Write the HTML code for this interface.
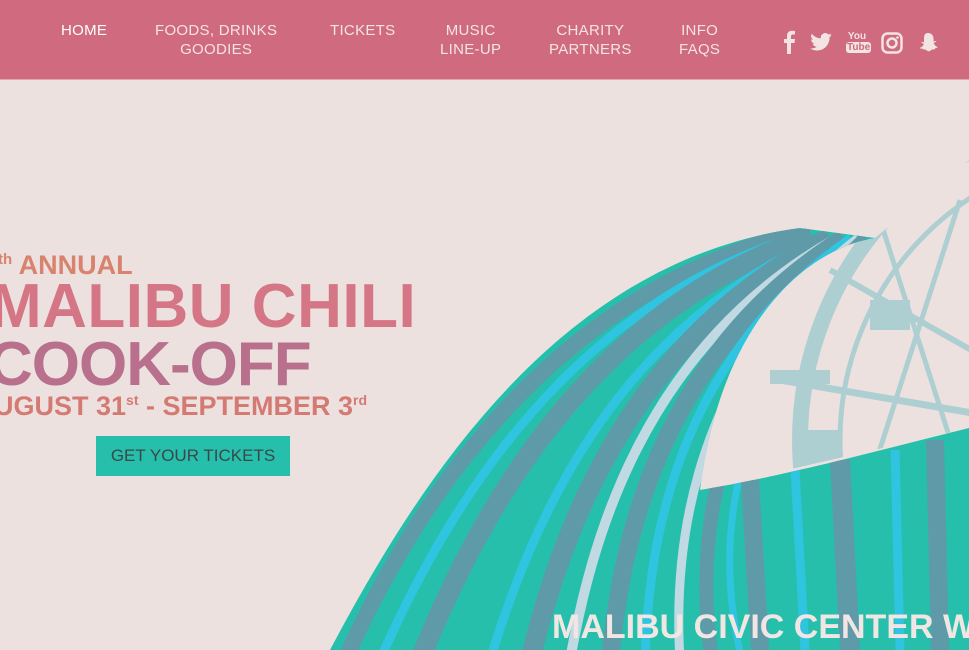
<!DOCTYPE html>
<html><head><meta charset="utf-8"><style>
*{margin:0;padding:0;box-sizing:border-box}
html,body{width:969px;height:650px;overflow:hidden}
body{background:#ede1e0;font-family:"Liberation Sans",sans-serif;position:relative}
.hdr{position:absolute;left:0;top:0;width:969px;height:80px;background:#d06a7e;border-bottom:1px solid #e2a9b4}
.nav{position:absolute;top:21px;color:#f3e4e4;font-size:15px;line-height:19px;text-align:center;letter-spacing:.3px}
.ic{position:absolute;top:30px}
.t{position:absolute;font-weight:bold;white-space:nowrap}
.btn{position:absolute;left:96px;top:436px;width:194px;height:40px;background:#26bfac;color:#3b4848;font-size:17px;line-height:40px;text-align:center}
</style></head><body>
<svg style="position:absolute;left:0;top:0" width="969" height="650">
<defs>
<clipPath id="wv"><path d="M330 650 C420 480 560 260 800 228 L875 238 C800 250 720 330 700 490 C790 475 880 450 969 428 L969 650 Z"/></clipPath>
<clipPath id="fw"><path d="M700 490 C720 330 800 250 875 238 L969 160 L969 428 Z"/></clipPath>
</defs>
<g clip-path="url(#fw)" fill="none" stroke="#aecfd2">
<circle cx="1130" cy="440" r="330" stroke-width="16"/>
<circle cx="1130" cy="440" r="290" stroke-width="5"/>
<line x1="780" y1="380" x2="1130" y2="440" stroke-width="7"/>
<line x1="830" y1="270" x2="1130" y2="440" stroke-width="6"/>
<line x1="800" y1="470" x2="1130" y2="440" stroke-width="5"/>
<line x1="880" y1="220" x2="960" y2="470" stroke-width="5"/>
<line x1="960" y1="200" x2="870" y2="480" stroke-width="5"/>
<rect x="770" y="370" width="60" height="14" fill="#aecfd2" stroke="none"/>
<rect x="870" y="300" width="40" height="30" fill="#aecfd2" stroke="none"/>
<rect x="800" y="430" width="40" height="35" fill="#aecfd2" stroke="none"/>
</g>
<g clip-path="url(#wv)">
<rect x="300" y="200" width="700" height="460" fill="#26bfac"/>
<g fill="none">
<path d="M345 660 C420 490 560 290 800 232" stroke="#5f9aa8" stroke-width="16"/>
<path d="M380 660 C450 500 575 300 806 234" stroke="#2fc4e0" stroke-width="9"/>
<path d="M420 660 C480 510 590 310 812 236" stroke="#5f9aa8" stroke-width="20"/>
<path d="M490 660 C530 530 610 330 824 238" stroke="#2fc4e0" stroke-width="9"/>
<path d="M530 660 C560 540 625 340 830 238" stroke="#5f9aa8" stroke-width="20"/>
<path d="M570 660 C590 550 638 350 837 238" stroke="#c1d9e2" stroke-width="10"/>
<path d="M610 660 C620 560 650 360 844 238" stroke="#5f9aa8" stroke-width="18"/>
<path d="M645 660 C648 570 662 370 851 238" stroke="#2fc4e0" stroke-width="9"/>
<path d="M680 660 C675 580 676 380 858 238" stroke="#c1d9e2" stroke-width="9"/>
<path d="M712 660 C700 580 690 400 866 238" stroke="#5f9aa8" stroke-width="14"/>
<path d="M742 660 C722 580 705 420 873 240" stroke="#2fc4e0" stroke-width="7"/>
<path d="M750 480 L760 650" stroke="#5f9aa8" stroke-width="18"/>
<path d="M795 470 L805 650" stroke="#2fc4e0" stroke-width="9"/>
<path d="M840 460 L850 650" stroke="#5f9aa8" stroke-width="20"/>
<path d="M895 450 L900 650" stroke="#2fc4e0" stroke-width="9"/>
<path d="M935 440 L940 650" stroke="#5f9aa8" stroke-width="18"/>
</g>
</g>
</svg>
<div class="hdr"></div>
<div class="nav" style="left:61px;color:#fff">HOME</div>
<div class="nav" style="left:155px">FOODS, DRINKS<br>GOODIES</div>
<div class="nav" style="left:330px">TICKETS</div>
<div class="nav" style="left:440px">MUSIC<br>LINE-UP</div>
<div class="nav" style="left:549px">CHARITY<br>PARTNERS</div>
<div class="nav" style="left:679px">INFO<br>FAQS</div>
<svg class="ic" style="left:782px" width="14" height="24" viewBox="0 0 14 24"><path d="M9 24V13h3.5l.5-4H9V6.5C9 5.3 9.4 4.5 11 4.5h2V1C12.5.9 11.3.8 10 .8 7 .8 5 2.6 5 6v3H2v4h3v11z" fill="#f3e4e4"/></svg>
<svg class="ic" style="left:810px;top:33px" width="22" height="18" viewBox="0 0 24 20"><path d="M24 2.4c-.9.4-1.8.6-2.8.8 1-.6 1.8-1.6 2.2-2.7-1 .6-2 1-3.1 1.2A4.9 4.9 0 0 0 11.9 6 14 14 0 0 1 1.7.9a4.9 4.9 0 0 0 1.5 6.6c-.8 0-1.6-.3-2.2-.6 0 2.4 1.7 4.4 3.9 4.8-.7.2-1.5.2-2.2.1.6 2 2.4 3.4 4.6 3.4A9.9 9.9 0 0 1 0 17.2 14 14 0 0 0 7.5 19.4c9.1 0 14-7.5 14-14v-.6c1-.7 1.8-1.6 2.5-2.4z" fill="#f3e4e4"/></svg>
<div class="ic" style="left:846px;top:31px;width:22px;color:#f3e4e4;font-size:10px;line-height:11px;font-weight:bold;text-align:center">You<br><span style="background:#f3e4e4;color:#d06a7e;border-radius:3px;padding:0 1px">Tube</span></div>
<svg class="ic" style="left:881px;top:32px" width="22" height="22" viewBox="0 0 22 22"><rect x="1.5" y="1.5" width="19" height="19" rx="5" fill="none" stroke="#f3e4e4" stroke-width="2.5"/><circle cx="11" cy="11" r="4.5" fill="none" stroke="#f3e4e4" stroke-width="2.5"/><circle cx="16.5" cy="5.5" r="1.3" fill="#f3e4e4"/></svg>
<svg class="ic" style="left:917px;top:32px" width="22" height="22" viewBox="0 0 22 22"><path d="M11 1c3.5 0 5.5 2.5 5.5 5.5v3l2-.5c.6 0 .8.7.2 1l-2 1c.5 2 2.3 3.5 4 4-.2.8-1.5 1-2.5 1.2-.2.8-.3 1.3-1.2 1.2-1.5-.2-2.6.3-3.5 1.2-1 .8-2.5.8-3.5 0-1-.9-2-1.4-3.5-1.2-.9.1-1-.4-1.2-1.2C4.3 16.9 3 16.7 2.8 15.9c1.7-.5 3.5-2 4-4l-2-1c-.6-.3-.4-1 .2-1l2 .5v-3C7 3.5 7.5 1 11 1z" fill="#f3e4e4"/></svg>

<div class="t" style="left:-2px;top:250px;font-size:27px;color:#d8836e"><sup style="font-size:15px">th</sup> ANNUAL</div>
<div class="t" style="left:-10px;top:271px;font-size:62px;color:#d47685;letter-spacing:0.5px">MALIBU CHILI</div>
<div class="t" style="left:-12px;top:329px;font-size:62px;color:#b8708c;letter-spacing:-1px">COOK-OFF</div>
<div class="t" style="left:-6px;top:391px;font-size:27px;color:#d47a72">UGUST 31<sup style="font-size:14px">st</sup> - SEPTEMBER 3<sup style="font-size:14px">rd</sup></div>
<div class="btn">GET YOUR TICKETS</div>
<div class="t" style="left:552px;top:608px;font-size:34px;color:#f2e6e4;width:417px;overflow:hidden">MALIBU CIVIC CENTER WAY</div>
</body></html>
